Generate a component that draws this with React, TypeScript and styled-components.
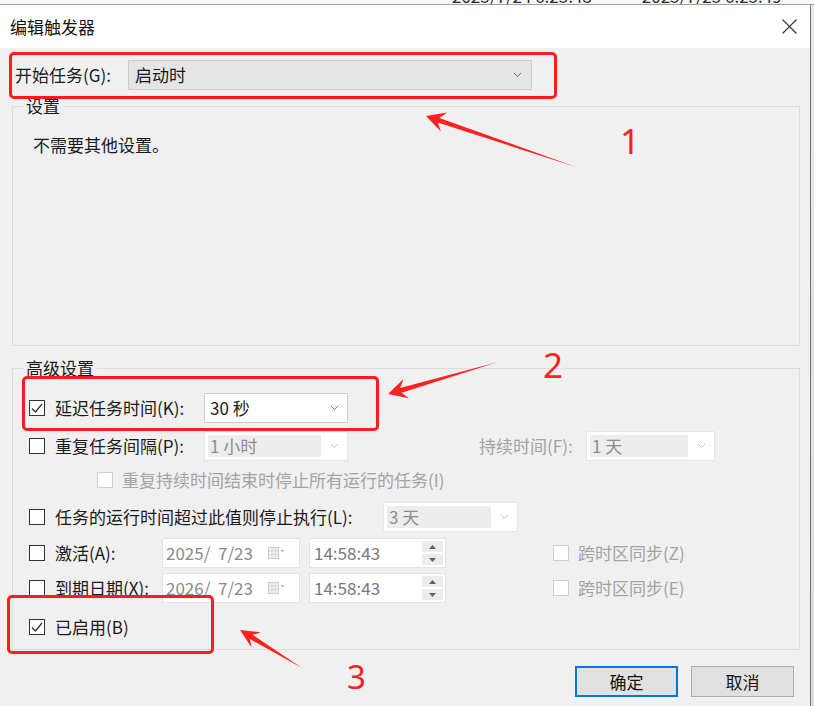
import React from "react";
import styled, { createGlobalStyle } from "styled-components";

const GlobalStyle = createGlobalStyle`
  html, body {
    margin: 0;
    padding: 0;
    background: #f0f0f0;
  }
  body {
    font-family: "Noto Sans CJK SC", "Noto Sans", sans-serif;
  }
`;

const Screen = styled.div`
  position: relative;
  width: 814px;
  height: 706px;
  overflow: hidden;
  background: #f0f0f0;
  font-family: "Noto Sans CJK SC", "Noto Sans", sans-serif;
  font-size: 17px;
  line-height: 20px;
  color: #1a1a1a;
  display: flex;
  flex-direction: column;
`;

// window behind the dialog, only its lower edge peeks out
const BackStrip = styled.div`
  height: 4px;
  flex: none;
  overflow: hidden;
  background: #f7f7f7;
  border-bottom: 1px solid #a0a0a0;
  display: flex;
  gap: 50px;
  padding-left: 452px;
  color: #2a2a2a;
  font-size: 17px;
  line-height: 17px;
`;

const BackText = styled.span`
  margin-top: -13px;
  white-space: nowrap;
`;

const Main = styled.div`
  flex: 1;
  display: flex;
`;

const Dialog = styled.div`
  width: 810px;
  flex: none;
  display: flex;
  flex-direction: column;
  background: #f0f0f0;
  border-right: 1px solid #707070;
`;

const Sliver = styled.div`
  flex: 1;
  background: linear-gradient(#e9e9e9, #dcdcdc);
`;

const TitleBar = styled.div`
  height: 43px;
  flex: none;
  background: #ffffff;
  display: flex;
  align-items: center;
  justify-content: space-between;
  padding: 0 13px 0 10px;
`;

const Title = styled.span`
  color: #111;
  font-size: 17px;
`;

const Body = styled.div`
  display: flex;
  flex-direction: column;
  padding: 0 10px 0 12px;
`;

const StartRow = styled.div`
  display: flex;
  align-items: center;
  height: 30px;
  margin: 12px 0 7px;
  padding-left: 3px;
`;

const Group = styled.fieldset<{ $h: number; $mt?: number; $pt: number }>`
  box-sizing: border-box;
  height: ${(p) => p.$h}px;
  margin: ${(p) => p.$mt ?? 0}px 0 0 0;
  padding: ${(p) => p.$pt}px 12px 0 16px;
  border: 1px solid #dcdcdc;
  min-width: 0;
`;

const Legend = styled.legend`
  padding: 0 3px;
  margin-left: -6px;
  font-size: 17px;
  line-height: 18px;
  color: #1a1a1a;
`;

const Note = styled.div`
  padding-left: 4px;
`;

const Row = styled.div<{ $mt?: number; $indent?: number }>`
  display: flex;
  align-items: center;
  height: 34px;
  margin-top: ${(p) => p.$mt ?? 0}px;
  padding-left: ${(p) => p.$indent ?? 0}px;
`;

const Box = styled.span<{ $disabled?: boolean }>`
  box-sizing: border-box;
  width: 16px;
  height: 16px;
  flex: none;
  border: 1px solid ${(p) => (p.$disabled ? "#cfcfcf" : "#333333")};
  background: #ffffff;
  display: flex;
  align-items: center;
  justify-content: center;
`;

const Label = styled.span<{ $w?: number; $muted?: boolean; $ml?: number }>`
  flex: none;
  width: ${(p) => (p.$w ? `${p.$w}px` : "auto")};
  margin-left: ${(p) => p.$ml ?? 10}px;
  white-space: nowrap;
  color: ${(p) => (p.$muted ? "#a3a3a3" : "#1a1a1a")};
`;

const Field = styled.div<{ $w: number; $bg?: string; $border?: string; $ml?: number }>`
  box-sizing: border-box;
  flex: none;
  width: ${(p) => p.$w}px;
  height: 30px;
  margin-left: ${(p) => p.$ml ?? 0}px;
  background: ${(p) => p.$bg ?? "#ffffff"};
  border: 1px solid ${(p) => p.$border ?? "#e3e3e3"};
  display: flex;
  align-items: center;
`;

const FieldText = styled.span<{ $color?: string; $pl?: number }>`
  padding-left: ${(p) => p.$pl ?? 5}px;
  color: ${(p) => p.$color ?? "#1a1a1a"};
  white-space: pre;
`;

const InnerGray = styled.span`
  flex: 1;
  align-self: stretch;
  margin: 3px 0 3px 3px;
  background: #ededed;
  display: flex;
  align-items: center;
  color: #8c8c8c;
  padding-left: 2px;
`;

const ChevronSlot = styled.span<{ $w?: number }>`
  width: ${(p) => p.$w ?? 26}px;
  flex: none;
  margin-left: auto;
  display: flex;
  align-items: center;
  justify-content: center;
`;

const Spin = styled.div`
  margin-left: auto;
  margin-right: 2px;
  display: flex;
  flex-direction: column;
  gap: 2px;
`;

const SpinButton = styled.div`
  width: 21px;
  height: 11px;
  background: #ececec;
  display: flex;
  align-items: center;
  justify-content: center;
`;

const CalSlot = styled.span`
  margin-left: auto;
  margin-right: 14px;
  display: flex;
  align-items: center;
  gap: 1px;
`;

const ButtonRow = styled.div`
  display: flex;
  justify-content: flex-end;
  gap: 13px;
  margin-top: 16px;
  padding-right: 6px;
`;

const Button = styled.button<{ $primary?: boolean }>`
  box-sizing: border-box;
  width: 103px;
  height: 31px;
  padding: 0;
  background: #e1e1e1;
  border: ${(p) => (p.$primary ? "2px solid #0078d7" : "1px solid #adadad")};
  font-family: inherit;
  font-size: 17px;
  color: #111;
`;

const Highlight = styled.div<{ $x: number; $y: number; $w: number; $h: number }>`
  position: absolute;
  left: ${(p) => p.$x}px;
  top: ${(p) => p.$y}px;
  width: ${(p) => p.$w}px;
  height: ${(p) => p.$h}px;
  box-sizing: border-box;
  border: 3px solid #ff1c1c;
  border-radius: 5px;
  pointer-events: none;
`;

const Mark = styled.span<{ $x: number; $y: number; $size?: number }>`
  position: absolute;
  left: ${(p) => p.$x}px;
  top: ${(p) => p.$y}px;
  font-family: "Noto Sans", "Open Sans", sans-serif;
  font-size: ${(p) => p.$size ?? 35}px;
  line-height: 1;
  color: #ff2020;
  pointer-events: none;
`;

const Overlay = styled.svg`
  position: absolute;
  left: 0;
  top: 0;
  pointer-events: none;
`;

const Chevron = ({ color = "#7a7a7a" }: { color?: string }) => (
  <svg width="9" height="6" viewBox="0 0 9 6">
    <polyline points="1,1 4.5,4.5 8,1" fill="none" stroke={color} strokeWidth="1" />
  </svg>
);

const Check = () => (
  <svg width="14" height="14" viewBox="0 0 14 14">
    <polyline points="2,7.5 5.5,11 12,3" fill="none" stroke="#333" strokeWidth="1.3" />
  </svg>
);

const CheckBox = ({ checked, disabled }: { checked?: boolean; disabled?: boolean }) => (
  <Box $disabled={disabled}>{checked && <Check />}</Box>
);

const Combo = ({ w, text, ml }: { w: number; text: string; ml?: number }) => (
  <Field $w={w} $ml={ml} $border="#cfcfcf">
    <FieldText>{text}</FieldText>
    <ChevronSlot>
      <Chevron />
    </ChevronSlot>
  </Field>
);

const DisabledCombo = ({ w, text, ml }: { w: number; text: string; ml?: number }) => (
  <Field $w={w} $ml={ml} $border="#e6e6e6">
    <InnerGray>{text}</InnerGray>
    <ChevronSlot>
      <Chevron color="#c2c2c2" />
    </ChevronSlot>
  </Field>
);

const CalendarIcon = () => (
  <svg width="17" height="12" viewBox="0 0 17 12">
    <rect x="0.5" y="0.5" width="10" height="11" fill="#f4f4f4" stroke="#cacaca" />
    <line x1="0.5" y1="4" x2="10.5" y2="4" stroke="#d6d6d6" />
    <line x1="0.5" y1="7.5" x2="10.5" y2="7.5" stroke="#d6d6d6" />
    <line x1="4" y1="0.5" x2="4" y2="11.5" stroke="#d6d6d6" />
    <line x1="7.3" y1="0.5" x2="7.3" y2="11.5" stroke="#d6d6d6" />
    <polygon points="12.5,3 16.5,3 14.5,5.5" fill="#b8b8b8" />
  </svg>
);

const DateField = ({ text, ml }: { text: string; ml?: number }) => (
  <Field $w={138} $ml={ml}>
    <FieldText $color="#8a8a8a" $pl={3}>
      {text}
    </FieldText>
    <CalSlot>
      <CalendarIcon />
    </CalSlot>
  </Field>
);

const Tri = ({ up }: { up?: boolean }) => (
  <svg width="7" height="4" viewBox="0 0 7 4">
    <polygon points={up ? "0,4 7,4 3.5,0" : "0,0 7,0 3.5,4"} fill="#606060" />
  </svg>
);

const TimeField = ({ text, ml }: { text: string; ml?: number }) => (
  <Field $w={137} $ml={ml}>
    <FieldText $color="#7a7a7a" $pl={4}>
      {text}
    </FieldText>
    <Spin>
      <SpinButton>
        <Tri up />
      </SpinButton>
      <SpinButton>
        <Tri />
      </SpinButton>
    </Spin>
  </Field>
);

type Pt = [number, number];

function arrowPoints(tip: Pt, tail: Pt, head: number, wing: number, shaft: number) {
  const dx = tail[0] - tip[0];
  const dy = tail[1] - tip[1];
  const len = Math.hypot(dx, dy);
  const ux = dx / len;
  const uy = dy / len;
  const nx = -uy;
  const ny = ux;
  const bx = tip[0] + ux * head;
  const by = tip[1] + uy * head;
  const kx = tip[0] + ux * head * 0.7;
  const ky = tip[1] + uy * head * 0.7;
  const pts: Pt[] = [
    tip,
    [bx + nx * wing, by + ny * wing],
    [kx + (nx * shaft) / 2, ky + (ny * shaft) / 2],
    tail,
    [kx - (nx * shaft) / 2, ky - (ny * shaft) / 2],
    [bx - nx * wing, by - ny * wing],
  ];
  return pts.map((p) => `${p[0].toFixed(1)},${p[1].toFixed(1)}`).join(" ");
}

const arrows = [
  { tip: [426, 116] as Pt, tail: [576, 167] as Pt, head: 19, wing: 10, shaft: 5 },
  { tip: [388, 394] as Pt, tail: [498, 362] as Pt, head: 19, wing: 10, shaft: 5 },
  { tip: [240, 630] as Pt, tail: [302, 668] as Pt, head: 19, wing: 9, shaft: 5 },
];

export default function App() {
  return (
    <>
      <GlobalStyle />
      <Screen>
        <BackStrip>
          <BackText>2025/7/24 6:25:48</BackText>
          <BackText>2025/7/25 6:25:49</BackText>
          <BackText>永</BackText>
        </BackStrip>
        <Main>
          <Dialog>
            <TitleBar>
              <Title>编辑触发器</Title>
              <svg width="15" height="15" viewBox="0 0 15 15">
                <line x1="0.5" y1="0.5" x2="14.5" y2="14.5" stroke="#333" strokeWidth="1.1" />
                <line x1="14.5" y1="0.5" x2="0.5" y2="14.5" stroke="#333" strokeWidth="1.1" />
              </svg>
            </TitleBar>
            <Body>
              <StartRow>
                <Label $w={113} $ml={0}>
                  开始任务(G):
                </Label>
                <Field $w={404} $bg="#e5e5e5" $border="#cccccc">
                  <FieldText $pl={6}>启动时</FieldText>
                  <ChevronSlot $w={28}>
                    <Chevron color="#6a6a6a" />
                  </ChevronSlot>
                </Field>
              </StartRow>

              <Group $h={249} $pt={20}>
                <Legend>设置</Legend>
                <Note>不需要其他设置。</Note>
              </Group>

              <Group $h={291} $mt={13} $pt={14}>
                <Legend>高级设置</Legend>
                <Row>
                  <CheckBox checked />
                  <Label $w={149}>延迟任务时间(K):</Label>
                  <Combo w={144} text="30 秒" />
                </Row>
                <Row $mt={4}>
                  <CheckBox />
                  <Label $w={149}>重复任务间隔(P):</Label>
                  <DisabledCombo w={144} text="1 小时" />
                  <Label $w={107} $ml={131} $muted>
                    持续时间(F):
                  </Label>
                  <DisabledCombo w={129} text="1 天" />
                </Row>
                <Row $indent={68}>
                  <CheckBox disabled />
                  <Label $muted $ml={9}>
                    重复持续时间结束时停止所有运行的任务(I)
                  </Label>
                </Row>
                <Row $mt={3}>
                  <CheckBox />
                  <Label $w={328}>任务的运行时间超过此值则停止执行(L):</Label>
                  <DisabledCombo w={135} text="3 天" />
                </Row>
                <Row $mt={2}>
                  <CheckBox />
                  <Label $w={107}>激活(A):</Label>
                  <DateField text="2025/  7/23" />
                  <TimeField text="14:58:43" ml={9} />
                  <Box $disabled style={{ marginLeft: 107 }} />
                  <Label $muted $ml={9}>
                    跨时区同步(Z)
                  </Label>
                </Row>
                <Row $mt={1}>
                  <CheckBox />
                  <Label $w={107}>到期日期(X):</Label>
                  <DateField text="2026/  7/23" />
                  <TimeField text="14:58:43" ml={9} />
                  <Box $disabled style={{ marginLeft: 107 }} />
                  <Label $muted $ml={9}>
                    跨时区同步(E)
                  </Label>
                </Row>
                <Row $mt={5}>
                  <CheckBox checked />
                  <Label>已启用(B)</Label>
                </Row>
              </Group>

              <ButtonRow>
                <Button $primary>确定</Button>
                <Button>取消</Button>
              </ButtonRow>
            </Body>
          </Dialog>
          <Sliver />
        </Main>

        <Highlight $x={9} $y={52} $w={548} $h={47} />
        <Highlight $x={22} $y={376} $w={357} $h={55} />
        <Highlight $x={7} $y={595} $w={207} $h={59} />

        <Overlay width="814" height="706" viewBox="0 0 814 706">
          {arrows.map((a, i) => (
            <polygon key={i} points={arrowPoints(a.tip, a.tail, a.head, a.wing, a.shaft)} fill="#ff2020" />
          ))}
        </Overlay>

        <Mark $x={620} $y={123}>1</Mark>
        <Mark $x={543} $y={347}>2</Mark>
        <Mark $x={347} $y={660} $size={33}>
          3
        </Mark>
      </Screen>
    </>
  );
}
